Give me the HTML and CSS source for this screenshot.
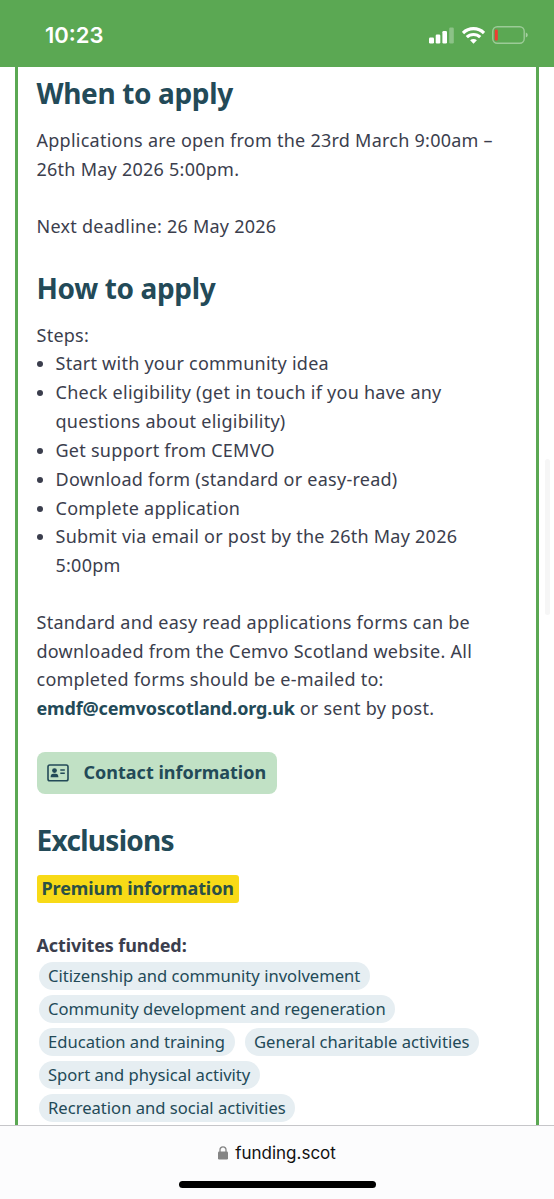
FILE: index.html
```html
<!DOCTYPE html>
<html lang="en">
<head>
  <meta charset="UTF-8">
  <title>Funding Scotland</title>
  <link rel="stylesheet" href="styles.css">
</head>
<body>
<div class="screen">
  <header class="status-bar">
    <div class="time">10:23</div>
    <div class="status-icons">
      <svg width="25" height="17" viewBox="0 0 25 17" fill="#fff">
        <rect x="0" y="10.5" width="5" height="6" rx="1.2"/>
        <rect x="6.7" y="7.5" width="4.6" height="9" rx="1.2"/>
        <rect x="13.4" y="4" width="4.6" height="12.5" rx="1.2"/>
        <rect x="20.2" y="0.5" width="4.6" height="16" rx="1.2" opacity="0.3"/>
      </svg>
      <svg class="wifi" width="23" height="17" viewBox="0 0 23 17" fill="none" stroke="#fff" stroke-width="3.2">
        <path d="M1 6a15 15 0 0 1 21 0"/>
        <path d="M4.8 10.2a9.6 9.6 0 0 1 13.4 0"/>
        <path d="M11.5 16.8l-3.4-3.5a4.9 4.9 0 0 1 6.8 0z" fill="#fff" stroke="none"/>
      </svg>
      <svg class="battery" width="37" height="18" viewBox="0 0 37 18">
        <rect x="0.8" y="0.8" width="31.4" height="16.4" rx="4.5" fill="none" stroke="#fff" stroke-opacity="0.4" stroke-width="1.4"/>
        <rect x="2.8" y="3.5" width="3" height="11" rx="1.2" fill="#f03c32"/>
        <path d="M33.8 6.5q2 0.700 2 2.500t-2 2.500z" fill="#fff" opacity="0.45"/>
      </svg>
    </div>
  </header>

  <main class="page">
    <div class="card">
      <h2>When to apply</h2>
      <p class="dates">Applications are open from the 23rd March 9:00am –<br>26th May 2026 5:00pm.</p>
      <p class="deadline">Next deadline: 26 May 2026</p>

      <h2>How to apply</h2>
      <p>Steps:</p>
      <ul class="steps">
        <li>Start with your community idea</li>
        <li>Check eligibility (get in touch if you have any<br>questions about eligibility)</li>
        <li>Get support from CEMVO</li>
        <li>Download form (standard or easy-read)</li>
        <li>Complete application</li>
        <li>Submit via email or post by the 26th May 2026<br>5:00pm</li>
      </ul>
      <p class="forms">Standard and easy read applications forms can be<br>downloaded from the Cemvo Scotland website. All<br>completed forms should be e-mailed to:<br><a class="email">emdf@cemvoscotland.org.uk</a> or sent by post.</p>

      <a class="contact-button">
        <svg width="22" height="18" viewBox="0 0 22 18">
          <rect x="1" y="1" width="20" height="15.8" rx="1.8" fill="none" stroke="#234a58" stroke-width="1.6"/>
          <circle cx="7.5" cy="6.6" r="2.4" fill="#234a58"/>
          <path d="M3.6 13.2q0-3.4 2.800-3.400h2.200q2.800 0 2.800 3.400z" fill="#234a58"/>
          <path d="M13.3 6h4.5M13.300 9.300h4.500" stroke="#234a58" stroke-width="1.6"/>
        </svg>
        <span>Contact information</span>
      </a>

      <h2 class="exclusions">Exclusions</h2>
      <div class="premium">Premium information</div>

      <p class="activities-title">Activites funded:</p>
      <div class="tags">
        <span class="tag">Citizenship and community involvement</span>
        <span class="tag">Community development and regeneration</span>
        <span class="tag">Education and training</span>
        <span class="tag">General charitable activities</span>
        <span class="tag">Sport and physical activity</span>
        <span class="tag">Recreation and social activities</span>
      </div>
    </div>
    <div class="scrollbar"></div>
  </main>

  <footer class="browser-bar">
    <div class="address">
      <svg width="10" height="14" viewBox="0 0 10 14">
        <rect x="0" y="5.5" width="10" height="8" rx="1.3" fill="#858585"/>
        <path d="M2 6.5V3.8a3 3 0 0 1 6 0v2.7" fill="none" stroke="#858585" stroke-width="1.3"/>
      </svg>
      <span>funding.scot</span>
    </div>
    <div class="home-indicator"></div>
  </footer>
</div>
</body>
</html>
```
FILE: styles.css
```css
* {
  box-sizing: border-box;
}

body {
  margin: 0;
  background: #fff;
  color: #3b3e4d;
  font-family: "Noto Sans", sans-serif;
  font-size: 18px;
  line-height: 28.6px;
}

.screen {
  display: flex;
  flex-direction: column;
  height: 1199px;
  overflow: hidden;
}

.status-bar {
  display: flex;
  justify-content: space-between;
  align-items: flex-start;
  flex: none;
  height: 67px;
  padding: 21px 25px 0 45px;
  background: #5ba853;
  color: #fff;
}

.time {
  font-family: Inter, sans-serif;
  font-size: 22px;
  font-weight: 600;
}

.status-icons {
  display: flex;
  align-items: center;
  padding-top: 5px;
}

.wifi {
  margin-left: 8px;
}

.battery {
  margin-left: 7px;
}

.page {
  position: relative;
  flex: 1;
  min-height: 0;
  padding: 0 15px;
}

.card {
  height: 1058px;
  padding: 6px 18px 0 18.5px;
  border-left: 3px solid #5ba853;
  border-right: 3px solid #5ba853;
}

h2 {
  margin: 0;
  color: #234a58;
  font-size: 28px;
  font-weight: 700;
  line-height: 40px;
  letter-spacing: -0.35px;
}

p {
  margin: 0;
  letter-spacing: 0.25px;
}

.dates {
  margin-top: 13px;
}

.deadline {
  margin: 29px 0 27px;
}

.deadline + h2 {
  margin-bottom: 13px;
}

.steps {
  margin: 0;
  padding-left: 19px;
  line-height: 28.85px;
  letter-spacing: 0.25px;
}

.forms {
  margin-top: 28px;
}

.email {
  color: #234a58;
  font-weight: 700;
  letter-spacing: -0.15px;
}

.contact-button {
  display: flex;
  align-items: center;
  gap: 15px;
  width: 240px;
  height: 42px;
  margin-top: 29px;
  padding: 0 10px;
  border-radius: 8px;
  background: #c1e1c5;
  color: #234a58;
  font-weight: 700;
  white-space: nowrap;
}

.exclusions {
  margin: 26px 0 15px;
  letter-spacing: -0.7px;
}

.premium {
  width: 202px;
  height: 28px;
  padding: 0 5px;
  border-radius: 3px;
  background: #f8da17;
  color: #2b5046;
  font-weight: 700;
  line-height: 27px;
  letter-spacing: -0.1px;
  white-space: nowrap;
}

.activities-title {
  margin-top: 28px;
  font-weight: 700;
  letter-spacing: -0.1px;
}

.tags {
  display: flex;
  flex-wrap: wrap;
  gap: 5px 10px;
  padding: 3px 30px 0 2px;
}

.tag {
  height: 28px;
  padding: 0 9.5px;
  border-radius: 14px;
  background: #e6eef2;
  color: #234a58;
  font-size: 16.6px;
  line-height: 27px;
  white-space: nowrap;
}

.scrollbar {
  position: absolute;
  top: 392px;
  right: 4px;
  width: 5px;
  height: 156px;
  border-radius: 3px;
  background: #f6f6f6;
}

.browser-bar {
  display: flex;
  flex-direction: column;
  align-items: center;
  flex: none;
  height: 74px;
  border-top: 1px solid #c6c6c9;
  background: #fcfcfd;
}

.address {
  display: flex;
  align-items: center;
  gap: 7px;
  margin-top: 13px;
  color: #111;
  font-family: Inter, sans-serif;
  font-size: 17px;
}

.home-indicator {
  width: 197px;
  height: 7px;
  margin-top: 13px;
  border-radius: 4px;
  background: #000;
}
```
